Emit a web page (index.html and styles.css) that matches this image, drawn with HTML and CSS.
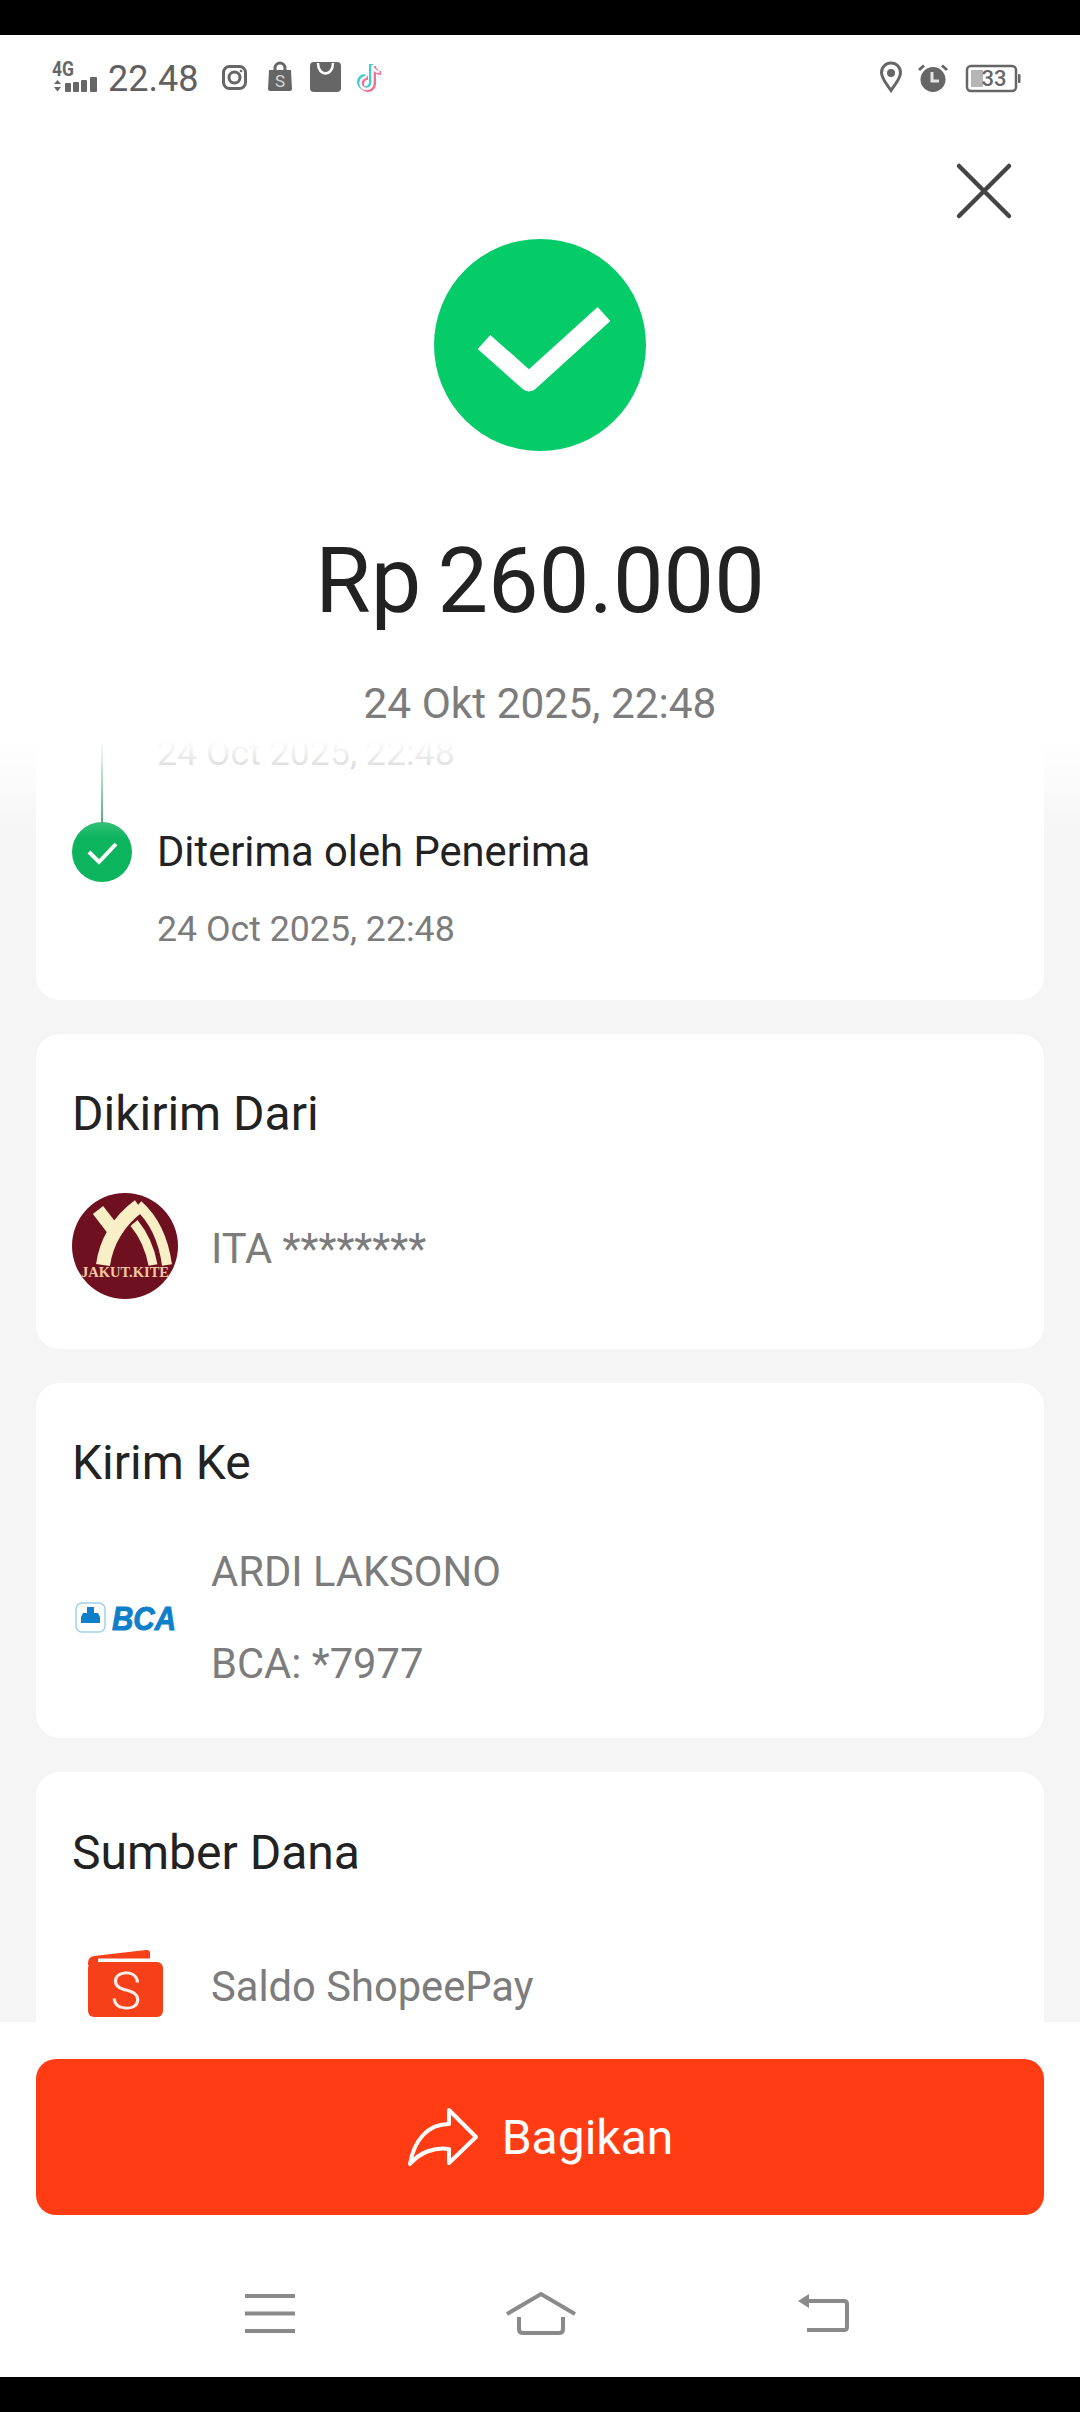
FILE: index.html
```html
<!DOCTYPE html>
<html lang="en">

<head>
    <meta charset="UTF-8">
    <meta name="viewport" content="width=device-width, initial-scale=1.0">
    <title>Transfer Berhasil</title>
    <link rel="stylesheet" href="styles.css">
</head>

<body>
    <div class="screen">
        <div class="black-bar"></div>

        <div class="status-bar">
            <svg class="signal-icon" width="46" height="30" viewBox="0 0 46 30">
                <text class="signal-text" x="0" y="13" textLength="22" lengthAdjust="spacingAndGlyphs">4G</text>
                <path class="grey-fill" d="M2 21l3.500-4 3.500 4zM2 24h7l-3.500 4.500z" />
                <rect class="grey-fill" x="13" y="20" width="6" height="9" rx="1" />
                <rect class="grey-fill" x="21" y="19" width="6" height="10" rx="1" />
                <rect class="grey-fill" x="29" y="17" width="6" height="12" rx="1" />
                <rect class="grey-fill" x="38" y="14" width="7" height="15" rx="1" />
            </svg>
            <span class="clock">22.48</span>
            <svg class="insta-icon" width="25" height="25" viewBox="0 0 25 25">
                <rect class="grey-line" x="1.500" y="1.500" width="22" height="22" rx="6" />
                <circle class="grey-line" cx="12.500" cy="12.500" r="5.500" />
                <circle class="grey-fill" cx="19" cy="6" r="1.300" />
            </svg>
            <svg class="shop-icon" width="24" height="29" viewBox="0 0 24 29">
                <path class="grey-line" d="M7 9V6a5 5 0 0 1 10 0v3" />
                <path class="grey-fill" d="M1 8h22l1 19q0 2-2 2H2q-2 0-2-2z" />
                <text class="shop-s" x="12" y="25">S</text>
            </svg>
            <svg class="bag-icon" width="31" height="30" viewBox="0 0 31 30">
                <rect class="grey-fill" width="31" height="30" rx="4" />
                <path class="bag-curve" d="M8 1c0 14 15 14 15 0" />
            </svg>
            <svg class="tiktok-icon" width="28" height="31" viewBox="0 0 28 31">
                <g class="note-cyan"><path d="M15 3v18a6 6 0 1 1-6-6" /><path d="M15 3c0 4 3 7 7 7" /></g>
                <g class="note-pink"><path d="M18 5v18a6 6 0 1 1-6-6" /><path d="M18 5c0 4 3 7 7 7" /></g>
                <g class="note-white"><path d="M16.500 4v18a6 6 0 1 1-6-6" /><path d="M16.500 4c0 4 3 7 7 7" /></g>
            </svg>

            <div class="status-right">
                <svg width="22" height="30" viewBox="0 0 22 30">
                    <path class="grey-line" d="M11 28.500C7 22 1.500 17 1.500 10.500a9.500 9.500 0 0 1 19 0C20.500 17 15 22 11 28.500z" />
                    <circle class="grey-fill" cx="11" cy="11" r="4" />
                </svg>
                <svg class="alarm-icon" width="30" height="28" viewBox="0 0 30 28">
                    <circle class="grey-fill" cx="15" cy="15.500" r="12.500" />
                    <path class="alarm-ear" d="M1 6l5-4.500M29 6l-5-4.500" />
                    <path class="alarm-hand" d="M14 8v9h7" />
                </svg>
                <svg class="battery-icon" width="55" height="27" viewBox="0 0 55 27">
                    <rect class="battery-shell" x="1" y="1" width="49" height="25" rx="4" />
                    <rect class="battery-level" x="5" y="5" width="12" height="17" />
                    <rect class="grey-fill" x="52" y="9" width="2.500" height="9" rx="1" />
                    <text class="battery-text" x="28" y="21">33</text>
                </svg>
            </div>
        </div>

        <div class="summary">
            <button class="close-btn" aria-label="Tutup">
                <svg width="56" height="56" viewBox="0 0 56 56"><path d="M3 3l50 50M53 3L3 53" /></svg>
            </button>
            <svg class="success-icon" width="212" height="212" viewBox="0 0 212 212">
                <circle cx="106" cy="106" r="106" />
                <path d="M50 103l45 40 75-68" />
            </svg>
            <div class="amount">Rp 260.000</div>
            <div class="amount-date">24 Okt 2025, 22:48</div>
        </div>

        <div class="content">
            <div class="fade-top"></div>

            <div class="card card-timeline">
                <div class="step-date step-date-prev">24 Oct 2025, 22:48</div>
                <div class="step-title">
                    <svg class="step-check" width="60" height="60" viewBox="0 0 60 60">
                        <circle cx="30" cy="30" r="30" />
                        <path d="M17 30l10 10 17-18" />
                    </svg>
                    <span>Diterima oleh Penerima</span>
                </div>
                <div class="step-date">24 Oct 2025, 22:48</div>
            </div>

            <div class="card card-from">
                <div class="card-title">Dikirim Dari</div>
                <div class="card-row card-row-from">
                    <svg class="avatar" width="106" height="106" viewBox="0 0 106 106">
                        <circle class="avatar-bg" cx="53" cy="53" r="53" />
                        <path class="avatar-arc" d="M31 72C34 50 46 28 67 13" stroke-width="14" />
                        <path class="avatar-arc" d="M26 17l20 26" stroke-width="13" />
                        <path class="avatar-arc" d="M66 12C84 28 92 50 95 72" stroke-width="10" />
                        <path class="avatar-arc" d="M62 30C72 42 78 56 81 72" stroke-width="9" />
                        <text class="avatar-text" x="53" y="84" textLength="88" lengthAdjust="spacingAndGlyphs">JAKUT.KITE</text>
                    </svg>
                    <div class="card-text">ITA ********</div>
                </div>
            </div>

            <div class="card card-to">
                <div class="card-title">Kirim Ke</div>
                <div class="card-row card-row-to">
                    <svg class="bca-logo" width="106" height="32" viewBox="0 0 106 32">
                        <rect class="bca-box" x="4" y="1" width="29" height="29" rx="6" />
                        <path class="bca-mark" d="M15 5h7v6h4l2 4v6H9v-6l2-4h4z" />
                        <text class="bca-text" x="40" y="28" textLength="64" lengthAdjust="spacingAndGlyphs">BCA</text>
                    </svg>
                    <div class="card-lines">
                        <div class="card-text">ARDI LAKSONO</div>
                        <div class="card-text">BCA: *7977</div>
                    </div>
                </div>
            </div>

            <div class="card card-source">
                <div class="card-title">Sumber Dana</div>
                <div class="card-row card-row-source">
                    <svg class="wallet-logo" width="106" height="68" viewBox="0 0 106 68">
                        <g transform="translate(16 0)">
                            <rect class="wallet-fill" x="0" y="13" width="75" height="55" rx="6" />
                            <path class="wallet-fill" d="M0 14q0-6 6-7L58 1q4-.5 4 3v5.500H10V16H0z" />
                            <text class="wallet-s" x="38" y="60">S</text>
                        </g>
                    </svg>
                    <div class="card-text">Saldo ShopeePay</div>
                </div>
            </div>
        </div>

        <div class="footer">
            <button class="share-btn">
                <svg width="72" height="60" viewBox="0 0 72 60">
                    <path d="M42 3l27 27-27 26V42C28 40 13 45 3 57 7 33 21 17 42 17z" />
                </svg>
                <span>Bagikan</span>
            </button>
        </div>

        <div class="nav-bar">
            <svg class="nav-menu" width="50" height="40" viewBox="0 0 50 40">
                <path d="M0 3h50M0 20.500h50M0 38h50" />
            </svg>
            <svg class="nav-home" width="70" height="43" viewBox="0 0 70 43">
                <path d="M1 22L35 2l34 20M13 25v12q0 4 4 4h36q4 0 4-4V25" />
            </svg>
            <svg class="nav-back" width="51" height="40" viewBox="0 0 51 40">
                <path class="nav-back-line" d="M6 9h40q3 0 3 3v23q0 3-3 3H9" />
                <path class="nav-back-head" d="M0 9l11-7v14z" />
            </svg>
        </div>

        <div class="black-bar"></div>
    </div>
</body>

</html>
```

FILE: styles.css
```css
:root {
    --dark-text: #222222;
    --grey-text: #7c7c7c;
    --icon-grey: #666666;
    --page-bg: #f5f5f5;
    --green: #05cb68;
    --step-green: #0db45e;
    --orange: #ff3c13;
}

* {
    box-sizing: border-box;
}

body {
    margin: 0;
    background-color: #000;
    font-family: 'Roboto', 'Liberation Sans', sans-serif;
}

svg {
    overflow: visible;
}

.screen {
    width: 1080px;
    height: 2412px;
    display: flex;
    flex-direction: column;
    overflow: hidden;
    background-color: #fff;
}

.black-bar {
    height: 35px;
    flex-shrink: 0;
    background-color: #000;
}

/* status bar */
.status-bar {
    height: 86px;
    padding: 26px 59px 0 52px;
    display: flex;
    align-items: flex-start;
    flex-shrink: 0;
}

.grey-fill {
    fill: var(--icon-grey);
}

.grey-line {
    fill: none;
    stroke: var(--icon-grey);
    stroke-width: 3;
}

.signal-icon {
    margin-top: 2px;
}

.signal-text {
    font-size: 20px;
    font-weight: 700;
    fill: var(--icon-grey);
}

.clock {
    margin-left: 10px;
    margin-top: 1px;
    font-size: 36px;
    line-height: 34px;
    color: #606060;
}

.insta-icon {
    margin-left: 24px;
    margin-top: 4px;
}

.shop-icon {
    margin-left: 21px;
    margin-top: 1px;
}

.shop-s {
    font-size: 17px;
    fill: #d8d8d8;
    text-anchor: middle;
}

.bag-icon {
    margin-left: 18px;
    margin-top: 1px;
}

.bag-curve {
    fill: none;
    stroke: #fff;
    stroke-width: 2.500;
}

.tiktok-icon {
    margin-left: 15px;
}

.tiktok-icon path {
    fill: none;
    stroke-width: 4;
}

.note-cyan path {
    stroke: #3ecbd8;
}

.note-pink path {
    stroke: #f26f92;
}

.note-white path {
    stroke: #f7f7f7;
    stroke-width: 2.500;
}

.status-right {
    margin-left: auto;
    display: flex;
    align-items: flex-start;
    gap: 16px;
    margin-top: 1px;
}

.alarm-icon {
    margin-top: 2px;
}

.alarm-ear {
    fill: none;
    stroke: var(--icon-grey);
    stroke-width: 3;
}

.alarm-hand {
    fill: none;
    stroke: #e4e4e4;
    stroke-width: 3;
}

.battery-icon {
    margin-top: 3px;
    margin-left: 2px;
}

.battery-shell {
    fill: none;
    stroke: var(--icon-grey);
    stroke-width: 2.500;
}

.battery-level {
    fill: #b5b5b5;
}

.battery-text {
    font-size: 22px;
    font-weight: 500;
    fill: var(--icon-grey);
    text-anchor: middle;
}

/* top summary */
.summary {
    position: relative;
    height: 607px;
    padding-top: 118px;
    display: flex;
    flex-direction: column;
    align-items: center;
    flex-shrink: 0;
    background-color: #fff;
}

.close-btn {
    position: absolute;
    top: 42px;
    right: 68px;
    padding: 0;
    border: none;
    background: none;
    line-height: 0;
}

.close-btn path {
    fill: none;
    stroke: #444;
    stroke-width: 4.500;
    stroke-linecap: round;
}

.success-icon circle {
    fill: var(--green);
}

.success-icon path {
    fill: none;
    stroke: #fff;
    stroke-width: 19;
    stroke-linejoin: round;
}

.amount {
    margin-top: 81px;
    font-size: 90px;
    line-height: 100px;
    word-spacing: -6px;
    color: var(--dark-text);
}

.amount-date {
    margin-top: 47px;
    font-size: 42.400px;
    line-height: 50px;
    color: var(--grey-text);
}

/* scrolling cards */
.content {
    position: relative;
    flex: 1;
    min-height: 0;
    overflow: hidden;
    padding: 0 36px;
    display: flex;
    flex-direction: column;
    gap: 34px;
    background-color: var(--page-bg);
}

.fade-top {
    position: absolute;
    top: 0;
    left: 0;
    right: 0;
    height: 110px;
    z-index: 2;
    background: linear-gradient(to bottom, #fff 12%, rgba(255, 255, 255, 0.75) 35%, rgba(255, 255, 255, 0));
}

.card {
    flex-shrink: 0;
    padding: 52px 36px 50px;
    border-radius: 24px;
    background-color: #fff;
}

.card-timeline {
    padding: 0 36px 49px;
    border-radius: 0 0 24px 24px;
}

.card-source {
    padding-top: 53px;
}

.step-date {
    padding-left: 85px;
    font-size: 35.700px;
    line-height: 44px;
    margin-top: 25px;
    color: var(--grey-text);
}

.step-date-prev {
    margin-top: 0;
    line-height: 50px;
}

.step-title {
    position: relative;
    margin-top: 44px;
    display: flex;
    align-items: center;
    gap: 25px;
    font-size: 41.700px;
    line-height: 60px;
    color: var(--dark-text);
}

/* line up to the previous step */
.step-title::before {
    content: '';
    position: absolute;
    left: 29px;
    bottom: 58px;
    width: 2px;
    height: 90px;
    background-color: #2f9e68;
}

.step-check circle {
    fill: var(--step-green);
}

.step-check path {
    fill: none;
    stroke: #fff;
    stroke-width: 4;
}

.card-title {
    font-size: 48px;
    line-height: 56px;
    color: var(--dark-text);
}

.card-row {
    display: flex;
    align-items: center;
    gap: 33px;
}

.card-row svg {
    flex-shrink: 0;
}

.card-row-from {
    margin-top: 51px;
}

.card-row-to {
    margin-top: 35px;
    margin-bottom: -22px;
}

.card-row-source {
    margin-top: 68px;
}

.card-text {
    font-size: 41.700px;
    line-height: 92px;
    color: var(--grey-text);
}

.card-row-from .card-text {
    padding-top: 6px;
    line-height: 60px;
}

.card-row-source .card-text {
    padding-top: 8px;
    line-height: 60px;
}

.avatar-bg {
    fill: #6e1020;
}

.avatar-arc {
    fill: none;
    stroke: #f8efc6;
}

.avatar-text {
    font-family: 'Liberation Serif', serif;
    font-size: 15px;
    font-weight: 700;
    fill: #f3c9a0;
    text-anchor: middle;
}

.bca-box {
    fill: #fff;
    stroke: #9fd0ee;
    stroke-width: 1.500;
}

.bca-mark {
    fill: #0f7fca;
}

.bca-text {
    font-family: 'Liberation Sans', sans-serif;
    font-size: 34px;
    font-weight: 700;
    font-style: italic;
    fill: #0f7fca;
    stroke: #0f7fca;
    stroke-width: 1;
}

.wallet-fill {
    fill: #f5401a;
}

.wallet-s {
    font-size: 52px;
    font-weight: 300;
    fill: #ffeee8;
    text-anchor: middle;
}

/* bottom actions */
.footer {
    height: 193px;
    padding: 37px 36px 0;
    flex-shrink: 0;
    background-color: #fff;
}

.share-btn {
    width: 100%;
    height: 156px;
    display: flex;
    align-items: center;
    justify-content: center;
    gap: 23px;
    border: none;
    border-radius: 20px;
    background-color: var(--orange);
    color: #fff;
    font-family: inherit;
    font-size: 48px;
}

.share-btn path {
    fill: none;
    stroke: #fff;
    stroke-width: 4;
    stroke-linejoin: round;
}

.nav-bar {
    height: 162px;
    padding: 77px 0 0 245px;
    display: flex;
    align-items: flex-start;
    flex-shrink: 0;
    background-color: #fff;
}

.nav-bar path {
    fill: none;
    stroke: #8a8a8a;
    stroke-width: 4;
}

.nav-menu {
    margin-top: 1px;
}

.nav-home {
    margin-left: 211px;
}

.nav-back {
    margin-left: 222px;
}

.nav-bar .nav-back-head {
    fill: #8a8a8a;
    stroke: none;
}
```
